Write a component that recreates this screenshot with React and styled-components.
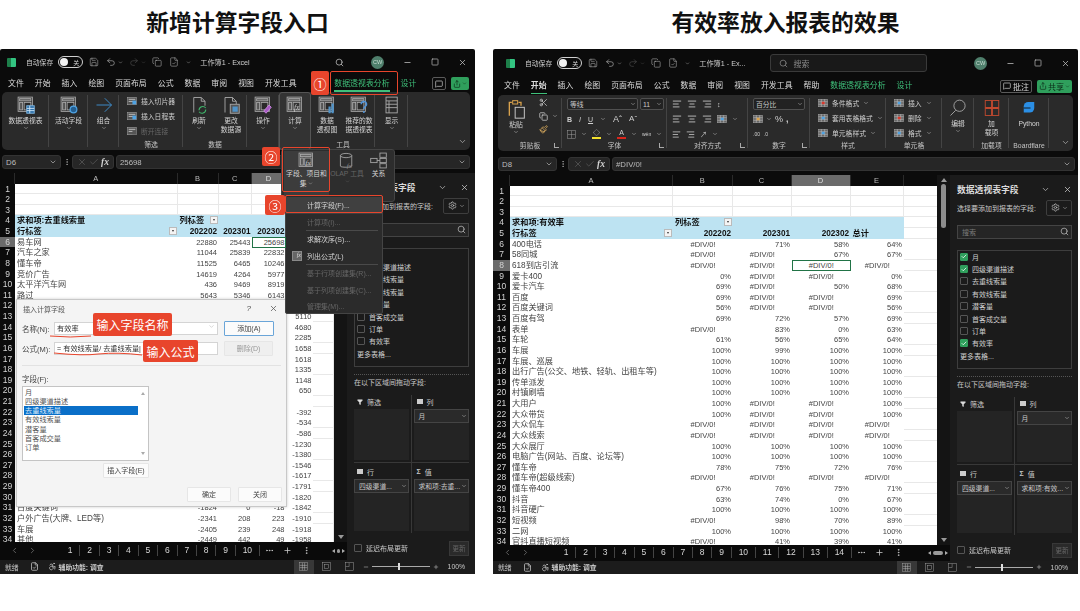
import React from 'react'
import styled, { createGlobalStyle } from 'styled-components'
import {
  Save, Undo2, Redo2, Search, ChevronDown, ChevronLeft, ChevronRight, X, Minus, Square, Check,
  MessageSquare, Share, Scissors, Copy, Paintbrush, Settings, Funnel, Plus, Ellipsis, EllipsisVertical,
  AlignLeft, AlignCenter, AlignRight, FileCheck, Accessibility,
} from 'lucide-react'

const CJK = `"Liberation Sans", "Noto Sans CJK SC", sans-serif`
const RED = '#e8452c'
const GREEN = '#3fc07a'

const Global = createGlobalStyle`
  html, body { margin: 0; background: #fff; overflow: hidden; }
  body { font-family: ${CJK}; }
  * { box-sizing: border-box; }
`

const Page = styled.div`
  display: flex;
  gap: 18px;
  width: 1080px;
  height: 611px;
  background: #fff;
`

const Column = styled.div`
  width: ${p => p.$w}px;
  display: flex;
  flex-direction: column;
`

const Heading = styled.h1`
  height: 49px;
  margin: 0;
  padding-bottom: 7px;
  display: flex;
  align-items: center;
  justify-content: center;
  font: 700 22.8px "Noto Sans CJK SC", sans-serif;
  color: #111;
`

const Window = styled.div`
  position: relative;
  height: 524.5px;
  display: flex;
  flex-direction: column;
  overflow: hidden;
  background: #0b0b0b;
  color: #d8d8d8;
  border-radius: 2px 2px 0 0;
  filter: blur(0.35px);
`

/* title bar */
const TitleBar = styled.div`
  flex: none;
  height: ${p => p.$h}px;
  display: flex;
  align-items: center;
  padding-left: ${p => p.$pl}px;
  padding-right: 8px;
`

const Logo = styled.div`
  width: 9px;
  height: 9px;
  background: linear-gradient(90deg, #1d7f4a 40%, #33c481 40%);
  border-radius: 1px;
  margin-right: 10px;
`

const SmallLabel = styled.span`
  font-size: ${p => p.$fs || 6.8}px;
  color: #cfcfcf;
  white-space: nowrap;
  margin-left: ${p => p.$ml || 0}px;
`

const Toggle = styled.div`
  width: 25px;
  height: 12px;
  margin-left: 5px;
  border: 1px solid #d0d0d0;
  border-radius: 6px;
  display: flex;
  align-items: center;
  justify-content: space-between;
  padding: 0 3px 0 1px;
  font-size: 6px;
  &::before {
    content: '';
    width: 8px;
    height: 8px;
    border-radius: 50%;
    background: #f2f2f2;
  }
`

const TitleIcon = styled.span`
  display: inline-flex;
  margin-left: ${p => p.$ml || 0}px;
  color: ${p => p.$c || '#c4c4c4'};
`

const SearchBox = styled.div`
  width: 157px;
  height: 18px;
  margin-left: 24px;
  border: 1px solid #3a3a3a;
  border-radius: 3px;
  background: #191919;
  display: flex;
  align-items: center;
  gap: 6px;
  padding-left: 8px;
  font-size: 8px;
  color: #8a8a8a;
`

const TitleRight = styled.div`
  margin-left: auto;
  display: flex;
  align-items: center;
`

const Avatar = styled.div`
  width: 13px;
  height: 13px;
  border-radius: 50%;
  background: #4f7f6c;
  color: #c8dcd2;
  font-size: 5.5px;
  display: flex;
  align-items: center;
  justify-content: center;
`

/* tab row */
const TabRow = styled.div`
  flex: none;
  height: ${p => p.$h}px;
  display: flex;
  align-items: center;
  gap: 11px;
  padding-left: ${p => p.$pl}px;
  padding-right: 6px;
`

const Tab = styled.span`
  position: relative;
  font-size: 7.9px;
  line-height: 16px;
  white-space: nowrap;
  visibility: ${p => (p.$ghost ? 'hidden' : 'visible')};
  color: ${p => (p.$green ? GREEN : '#dcdcdc')};
  font-weight: ${p => (p.$active ? 700 : 400)};
  &::after {
    content: ${p => (p.$under ? "''" : 'none')};
    position: absolute;
    left: 0;
    right: 0;
    bottom: 0;
    height: 1.2px;
    background: ${GREEN};
  }
`

const TabTools = styled.div`
  margin-left: auto;
  display: flex;
  align-items: center;
  gap: ${p => p.$gap}px;
`

const CommentBtn = styled.div`
  height: 13px;
  border: 1px solid #5a5a5a;
  border-radius: 2px;
  padding: 0 2px;
  display: flex;
  align-items: center;
  gap: 2px;
  font-size: 8px;
`

const ShareBtn = styled.div`
  height: 13px;
  padding: 0 2px;
  border-radius: 2px;
  background: #2f9f5c;
  color: #0c2a18;
  font-size: 8px;
  display: flex;
  align-items: center;
  gap: 1px;
`

/* ribbon */
const Ribbon = styled.div`
  flex: none;
  height: ${p => p.$h}px;
  margin: 0 ${p => p.$mr}px 0 ${p => p.$ml}px;
  background: #2a2a2a;
  border-radius: 5px;
  display: flex;
  position: relative;
`

const Group = styled.div`
  position: relative;
  width: ${p => p.$w}px;
  flex: none;
  display: flex;
  flex-direction: column;
  &::after {
    content: ${p => (p.$nosep ? 'none' : "''")};
    position: absolute;
    right: 0;
    top: 3px;
    bottom: 3px;
    width: 1px;
    background: #444;
  }
`

const GroupBody = styled.div`
  flex: 1;
  min-height: 0;
  display: flex;
  justify-content: ${p => p.$jc || 'center'};
`

const GroupLabel = styled.div`
  height: 11px;
  line-height: 11px;
  font-size: 6.8px;
  color: #c4c4c4;
  text-align: center;
  white-space: nowrap;
`

const BigButton = styled.div`
  flex: ${p => (p.$w ? 'none' : 1)};
  width: ${p => (p.$w ? `${p.$w}px` : 'auto')};
  display: flex;
  flex-direction: column;
  align-items: center;
  padding-top: 3px;
  font-size: 6.8px;
  line-height: 9px;
  text-align: center;
  color: #d4d4d4;
  border: 1px solid ${p => (p.$on ? '#555' : 'transparent')};
  border-radius: 3px;
  background: ${p => (p.$on ? '#333' : 'transparent')};
  white-space: nowrap;
  svg { flex: none; }
  span { margin-top: ${p => p.$gap ?? 2}px; }
`

const StackList = styled.div`
  flex: 1;
  display: flex;
  flex-direction: column;
  justify-content: space-around;
  padding: 1px 0 0 8px;
`

const StackItem = styled.div`
  display: flex;
  align-items: center;
  gap: 4px;
  font-size: 6.8px;
  white-space: nowrap;
  color: ${p => (p.$off ? '#666' : '#cfcfcf')};
`

const Launcher = styled.span`
  position: absolute;
  right: 3px;
  bottom: 3px;
  width: 5px;
  height: 5px;
  border-left: 1px solid #aaa;
  border-bottom: 1px solid #aaa;
`

const CornerChevron = styled.span`
  position: absolute;
  right: 3px;
  bottom: 4px;
  display: flex;
  color: #b0b0b0;
`

const ControlCol = styled.div`
  flex: 1;
  display: flex;
  flex-direction: column;
  gap: 3px;
  padding: 3px 3px 0 5px;
`

const ControlRow = styled.div`
  height: ${p => p.$h || 12}px;
  display: flex;
  align-items: center;
  gap: ${p => p.$gap ?? 4}px;
  font-size: 8px;
  color: #cfcfcf;
`

const Combo = styled.div`
  width: ${p => p.$w}px;
  height: 12px;
  border: 1px solid #505050;
  border-radius: 2px;
  background: #222;
  display: flex;
  align-items: center;
  justify-content: space-between;
  padding: 0 1px 0 2px;
  font-size: 6.8px;
  color: #c8c8c8;
`

const Glyph = styled.span`
  display: inline-flex;
  flex-direction: column;
  align-items: center;
  font-size: ${p => p.$s || 8}px;
  font-weight: ${p => p.$b || 400};
  font-style: ${p => p.$i ? 'italic' : 'normal'};
  text-decoration: ${p => p.$u ? 'underline' : 'none'};
  line-height: 1;
  color: #d0d0d0;
  &::after {
    content: ${p => (p.$bar ? "''" : 'none')};
    width: 9px;
    height: 2px;
    margin-top: 1px;
    background: ${p => p.$bar};
  }
`

/* formula bar */
const FormulaBar = styled.div`
  flex: none;
  height: 14px;
  margin: ${p => p.$mt}px ${p => p.$mr}px 0 ${p => p.$ml}px;
  display: flex;
  align-items: stretch;
  font-size: 7.8px;
  color: #bdbdbd;
`

const FormulaBox = styled.div`
  width: ${p => p.$w ? `${p.$w}px` : 'auto'};
  flex: ${p => p.$w ? 'none' : 1};
  margin-left: ${p => p.$ml || 0}px;
  background: #262626;
  border: 1px solid #333;
  border-radius: 3px;
  display: flex;
  align-items: center;
  justify-content: ${p => p.$jc || 'space-between'};
  padding: 0 3px;
`

const Dots = styled.span`
  width: 11px;
  display: flex;
  align-items: center;
  justify-content: center;
  color: #aaa;
`

const FxMark = styled.span`
  font: italic 700 9.5px "Liberation Serif", serif;
  color: #d4d4d4;
`

/* body */
const Body = styled.div`
  flex: 1;
  min-height: 0;
  margin-top: ${p => p.$mt}px;
  display: flex;
`

const SheetCol = styled.div`
  flex: 1;
  min-width: 0;
  display: flex;
  flex-direction: column;
`

const SheetWrap = styled.div`
  flex: 1;
  min-height: 0;
  display: flex;
`

const Sheet = styled.div`
  flex: 1;
  overflow: hidden;
  background: #fff;
`

const Row = styled.div`
  display: grid;
  grid-template-columns: ${p => p.$cols};
  height: ${p => p.$h || 10.64}px;
`

const ColHead = styled.div`
  background: ${p => (p.$sel ? '#6b6b6b' : '#0b0b0b')};
  color: ${p => (p.$sel ? '#e0e0e0' : '#bcbcbc')};
  border-right: 1px solid #2a2a2a;
  font-size: 7.5px;
  line-height: 11px;
  text-align: center;
`

const RowHead = styled.div`
  background: ${p => (p.$sel ? '#6b6b6b' : '#0b0b0b')};
  color: #d4d4d4;
  font-size: 8.5px;
  line-height: 10.6px;
  text-align: center;
`

const Cell = styled.div`
  position: relative;
  background: ${p => (p.$blue ? '#bde3f2' : '#fff')};
  color: ${p => (p.$bold ? '#111' : '#444')};
  font-weight: ${p => (p.$bold ? 700 : 400)};
  font-size: ${p => (p.$bold ? 8.2 : p.$num ? 7.5 : 8.2)}px;
  line-height: 11px;
  padding: 0 1.5px 0 2px;
  white-space: nowrap;
  text-align: ${p => p.$align || 'left'};
  border-right: ${p => (p.$grid ? '1px solid #e8e8e8' : 'none')};
  border-bottom: ${p => (p.$grid ? '1px solid #e8e8e8' : 'none')};
  outline: ${p => (p.$sel ? '1.2px solid #217346' : 'none')};
  outline-offset: -1px;
  z-index: ${p => (p.$sel ? 1 : 0)};
`

const FilterBtn = styled.span`
  position: absolute;
  right: 1px;
  top: 1px;
  width: 8px;
  height: 8px;
  background: #f4f4f4;
  border: 1px solid #bbb;
  display: flex;
  align-items: center;
  justify-content: center;
  &::after {
    content: '';
    border-left: 1.5px solid transparent;
    border-right: 1.5px solid transparent;
    border-top: 2px solid #333;
  }
`

const VScroll = styled.div`
  width: 13px;
  flex: none;
  background: #141414;
  display: flex;
  flex-direction: column;
  align-items: center;
  padding-top: 3px;
  &::before {
    content: '';
    border-left: 3px solid transparent;
    border-right: 3px solid transparent;
    border-bottom: 4px solid #999;
    margin-bottom: 2px;
  }
  &::after {
    content: '';
    margin-top: auto;
    margin-bottom: 3px;
    border-left: 3px solid transparent;
    border-right: 3px solid transparent;
    border-top: 4px solid #999;
  }
`

const VThumb = styled.div`
  width: 5px;
  height: 44px;
  border-radius: 3px;
  background: #8c8c8c;
`

const TabsBar = styled.div`
  flex: none;
  height: ${p => p.$h}px;
  background: #0a0a0a;
  display: flex;
  align-items: center;
  padding-left: 10px;
  color: #cfcfcf;
  font-size: 8.5px;
`

const SheetTab = styled.span`
  padding: 0 6.85px;
  line-height: 11px;
  border-right: 1px solid #444;
  color: #d8d8d8;
`

const TabsNav = styled.div`
  display: flex;
  align-items: center;
  gap: 9px;
  margin-right: ${p => p.$mr}px;
  color: #777;
`

const TabsEnd = styled.div`
  display: flex;
  align-items: center;
  gap: 9.5px;
  margin-left: 5px;
  color: #cfcfcf;
`

const HScroll = styled.div`
  margin-left: auto;
  margin-right: 2px;
  display: flex;
  align-items: center;
  gap: 2px;
  &::before, &::after {
    content: '';
    border-top: 2.5px solid transparent;
    border-bottom: 2.5px solid transparent;
  }
  &::before { border-right: 3px solid #aaa; }
  &::after { border-left: 3px solid #aaa; }
`

const HThumb = styled.span`
  width: ${p => p.$w}px;
  height: 4px;
  border-radius: 2px;
  background: #999;
`

/* pivot panel */
const Panel = styled.aside`
  width: 128px;
  flex: none;
  background: #1b1b1b;
  padding: 8px 6px 0 7px;
  display: flex;
  flex-direction: column;
  font-size: 7px;
  color: #c8c8c8;
`

const PanelHead = styled.div`
  height: 13px;
  display: flex;
  align-items: center;
  font-size: 8.8px;
  font-weight: 700;
  color: #dadada;
  gap: 13px;
  span { margin-right: auto; white-space: nowrap; }
`

const PanelSub = styled.div`
  height: 16px;
  margin-top: 4px;
  display: flex;
  align-items: center;
  justify-content: space-between;
  white-space: nowrap;
`

const GearBtn = styled.div`
  width: 26px;
  height: 16px;
  border: 1px solid #3e3e3e;
  border-radius: 2px;
  display: flex;
  align-items: center;
  justify-content: center;
  gap: 2px;
`

const PanelSearch = styled.div`
  height: 14px;
  margin-top: 9px;
  border: 1px solid #444;
  background: #252525;
  display: flex;
  align-items: center;
  justify-content: space-between;
  padding: 0 2px 0 4px;
  color: #7a7a7a;
`

const FieldList = styled.div`
  height: 119px;
  margin-top: 11px;
  border: 1px solid #3e3e3e;
  padding: 0 0 0 2px;
`

const FieldRow = styled.div`
  height: 12.4px;
  display: flex;
  align-items: center;
  gap: 4px;
  white-space: nowrap;
  color: #cfcfcf;
`

const CheckBox = styled.span`
  width: 8px;
  height: 8px;
  flex: none;
  border: 1px solid ${p => (p.$on ? '#2f9f5c' : '#555')};
  background: ${p => (p.$on ? '#2f9f5c' : 'transparent')};
  border-radius: 1px;
  display: flex;
  align-items: center;
  justify-content: center;
  color: #fff;
`

const DashLine = styled.div`
  margin-top: 7px;
  border-top: 1px dotted #555;
`

const PanelHint = styled.div`
  height: 12px;
  margin-top: 2px;
  line-height: 12px;
  white-space: nowrap;
`

const Areas = styled.div`
  margin-top: 6px;
  display: grid;
  grid-template-columns: 1fr 1fr;
  grid-template-rows: 68px 70px;
`

const Area = styled.div`
  display: flex;
  flex-direction: column;
  border-right: ${p => (p.$right ? 'none' : '1px solid #383838')};
  border-bottom: ${p => (p.$bottom ? 'none' : '1px solid #383838')};
  padding: ${p => (p.$bottom ? 2 : 0)}px ${p => (p.$right ? '0 0 2px' : '2px 0 0')};
`

const AreaHead = styled.div`
  height: 14px;
  flex: none;
  display: flex;
  align-items: center;
  gap: 4px;
  padding-left: 3px;
`

const AreaMark = styled.span`
  width: 6px;
  height: 5px;
  background: #ccc;
`

const AreaBox = styled.div`
  flex: 1;
  margin-bottom: 2px;
  background: #242424;
`

const AreaChip = styled.div`
  height: 14px;
  flex: none;
  border: 1px solid #444;
  background: #2a2a2a;
  display: flex;
  align-items: center;
  justify-content: space-between;
  padding: 0 1px 0 4px;
  white-space: nowrap;
  font-size: 6.8px;
`

const PanelFoot = styled.div`
  margin-top: 8px;
  display: flex;
  align-items: center;
  gap: 4px;
`

const UpdateBtn = styled.div`
  margin-left: auto;
  width: 20px;
  height: 15px;
  background: #2a2a2a;
  border: 1px solid #383838;
  color: #666;
  font-size: 6.5px;
  line-height: 13px;
  text-align: center;
`

/* status bar */
const StatusBar = styled.div`
  flex: none;
  height: ${p => p.$h}px;
  background: #1c1c1c;
  display: flex;
  align-items: center;
  padding: 0 10px 0 5px;
  font-size: 6.8px;
  color: #c8c8c8;
`

const StatusItem = styled.span`
  display: inline-flex;
  align-items: center;
  gap: 2px;
  margin-left: ${p => p.$ml || 0}px;
  font-weight: ${p => p.$b || 400};
`

const StatusRight = styled.div`
  margin-left: auto;
  display: flex;
  align-items: center;
  height: 100%;
`

const ViewBtn = styled.span`
  width: 20px;
  height: 100%;
  margin-right: 3px;
  display: flex;
  align-items: center;
  justify-content: center;
  background: ${p => (p.$on ? '#383838' : 'transparent')};
`

const Slider = styled.div`
  position: relative;
  width: 58px;
  height: 1px;
  margin: 0 3px;
  background: #aaa;
  &::after {
    content: '';
    position: absolute;
    left: 26px;
    top: -3px;
    width: 2px;
    height: 7px;
    background: #ddd;
  }
`

/* insert dialog */
const Dialog = styled.div`
  position: absolute;
  left: 16px;
  top: 250px;
  width: 271px;
  height: 208px;
  background: #f4f4f4;
  border: 1px solid #c8c8c8;
  color: #444;
  font-size: 7.5px;
  padding: 4px 5px 0;
  display: flex;
  flex-direction: column;
  box-shadow: 0 0 3px rgba(0,0,0,.2);
`

const DialogHead = styled.div`
  height: 9px;
  display: flex;
  align-items: center;
  justify-content: space-between;
  font-size: 7px;
  padding: 0 3px 0 1px;
  color: #555;
  span:last-child { display: flex; gap: 18px; font-size: 8px; }
`

const FormRow = styled.div`
  margin-top: ${p => p.$mt}px;
  display: flex;
  align-items: center;
  height: 15px;
`

const FormLabel = styled.span`
  width: 32px;
  flex: none;
  white-space: nowrap;
`

const FormInput = styled.div`
  width: 164px;
  height: 13px;
  background: #fff;
  border: 1px solid #d4d4d4;
  padding: 0 2px;
  line-height: 11px;
  font-size: 7.2px;
  color: #333;
  display: flex;
  justify-content: space-between;
  white-space: nowrap;
  overflow: hidden;
`

const DlgBtn = styled.div`
  width: ${p => p.$w}px;
  height: 15px;
  margin-left: ${p => p.$ml || 0}px;
  background: ${p => (p.$off ? '#efefef' : '#fbfbfb')};
  border: 1px solid ${p => (p.$primary ? '#6aa5d8' : '#e6e6e6')};
  color: ${p => (p.$off ? '#999' : '#444')};
  line-height: 13px;
  font-size: 7px;
  text-align: center;
  border-radius: 1px;
  flex: none;
`

const DlgRule = styled.div`
  margin-top: 9px;
  border-top: 1px solid #e2e2e2;
`

const FieldTitle = styled.div`
  margin-top: 9px;
  line-height: 9px;
`

const DlgList = styled.div`
  width: 127px;
  height: 75px;
  margin-top: 2px;
  background: #fff;
  border: 1px solid #c4c4c4;
  padding: 1px 10px 0 1px;
  position: relative;
  &::before, &::after {
    content: '';
    position: absolute;
    right: 3px;
    border-left: 2.5px solid transparent;
    border-right: 2.5px solid transparent;
  }
  &::before { top: 5px; border-bottom: 3px solid #aaa; }
  &::after { bottom: 5px; border-top: 3px solid #aaa; }
`

const DlgItem = styled.div`
  height: 9.15px;
  line-height: 9.15px;
  font-size: 7.2px;
  padding-left: 1px;
  background: ${p => (p.$sel ? '#0a6fc8' : 'transparent')};
  color: ${p => (p.$sel ? '#dcecfa' : '#555')};
`

const DlgFootRow = styled.div`
  margin-top: ${p => p.$mt}px;
  display: flex;
  padding-left: ${p => p.$pl || 0}px;
`

/* ribbon flyout + menu */
const Flyout = styled.div`
  position: absolute;
  left: 281px;
  top: 100px;
  width: 114px;
  height: 53px;
  background: #2d2d2d;
  border: 1px solid #444;
  border-radius: 3px;
  display: flex;
  padding: 1px 2px;
`

const FlyBtn = styled.div`
  width: ${p => p.$w}px;
  flex: none;
  display: flex;
  flex-direction: column;
  align-items: center;
  padding-top: 1px;
  text-align: center;
  font-size: 6.8px;
  line-height: 10px;
  white-space: nowrap;
  color: ${p => (p.$off ? '#666' : '#d4d4d4')};
  background: ${p => (p.$on ? '#3c3c3c' : 'transparent')};
  svg { flex: none; }
`

const Menu = styled.div`
  position: absolute;
  left: 285px;
  top: 146px;
  width: 98px;
  height: 119px;
  background: #2b2b2b;
  border: 1px solid #444;
  border-radius: 2px;
  padding: 1px 0;
`

const MenuItem = styled.div`
  height: ${p => p.$h || 16.5}px;
  display: flex;
  align-items: center;
  padding-left: 21px;
  position: relative;
  font-size: 7px;
  white-space: nowrap;
  color: ${p => (p.$off ? '#666' : '#d4d4d4')};
  background: ${p => (p.$on ? '#404040' : 'transparent')};
`

const MenuIcon = styled.span`
  position: absolute;
  left: 6px;
  top: 3px;
  width: 10px;
  height: 10px;
  background: #666;
  border: 1px solid #8a8a8a;
  font: italic 6px "Liberation Serif", serif;
  text-align: right;
  color: #ddd;
`

const MenuRule = styled.div`
  margin: 0 4px 0 20px;
  border-top: 1px solid #4a4a4a;
`

/* annotations over the screenshot */
const Mark = styled.div`
  position: absolute;
  left: ${p => p.$x}px;
  top: ${p => p.$y}px;
  width: ${p => p.$w}px;
  height: ${p => p.$h}px;
  background: ${RED};
  color: #fff;
  border-radius: 2px;
  font: ${p => p.$fs || 14}px "Noto Sans CJK SC", sans-serif;
  display: flex;
  align-items: center;
  justify-content: center;
  white-space: nowrap;
  z-index: 5;
`

const Outline = styled.div`
  position: absolute;
  left: ${p => p.$x}px;
  top: ${p => p.$y}px;
  width: ${p => p.$w}px;
  height: ${p => p.$h}px;
  border: 1px solid ${RED};
  border-radius: 2px;
  z-index: 5;
`

const Scribble = styled.svg`
  position: absolute;
  left: ${p => p.$x}px;
  top: ${p => p.$y}px;
  z-index: 5;
`

/* ribbon drawings */
const Draw = ({ s = 18, children }) => (
  <svg width={s} height={s} viewBox="0 0 24 24" fill="none" stroke="#a9a9a9" strokeWidth="1.2">{children}</svg>
)

const PivotBase = () => (
  <>
    <rect x="1.5" y="1.5" width="19" height="19" />
    <rect x="3.5" y="3.5" width="15" height="3" fill="#666" />
    <rect x="3.5" y="8.5" width="4" height="10" fill="#555" />
    <rect x="9.5" y="8.5" width="9" height="10" />
  </>
)

const IconPivot = () => <Draw><PivotBase /><rect x="13" y="13" width="10" height="10" fill="#2b6ea8" stroke="#7fb6e0" /><path d="M13 16.5h10M13 19.5h10M17 13v10" stroke="#cfe6f7" /></Draw>
const IconField = () => <Draw><PivotBase /><circle cx="18" cy="18" r="4.5" fill="#235f92" stroke="#4fa3e3" strokeWidth="1.6" /></Draw>
const IconArrow = () => <Draw><path d="M2 12h20M13 3l9 9-9 9" stroke="#3f93d6" /></Draw>
const IconSheet = ({ tone = '#4fa3e3' }) => <Draw s={10}><rect x="1.5" y="3" width="21" height="18" fill="#555" /><path d="M4 8h16M4 13h16" stroke="#ccc" strokeWidth="2" /><rect x="13" y="11" width="9" height="9" fill={tone} stroke="none" /></Draw>
const IconRefresh = () => <Draw><path d="M5 22V2h10l5 5v6M15 2v5h5" /><path d="M12 19a5 5 0 0 1 9-3M21 18a5 5 0 0 1-9 3" stroke="#3fb56b" strokeWidth="1.4" /></Draw>
const IconSource = () => <Draw><path d="M4 22V2h10l5 5v4M14 2v5h5" /><rect x="11" y="11" width="12" height="12" fill="#555" /><rect x="14" y="14" width="7" height="7" fill="#4f93c9" stroke="none" /></Draw>
const IconAction = () => <Draw><PivotBase /><path d="M13 20l7-8 3 3-7 8z" fill="#a85ac4" stroke="#c98adf" /></Draw>
const IconCalc = ({ s = 18 }) => <Draw s={s}><PivotBase /><text x="10.5" y="18" fontSize="10" fontStyle="italic" fontFamily="Liberation Serif" fill="#d0d0d0" stroke="none">fx</text></Draw>
const IconChart = () => <Draw><PivotBase /><rect x="14" y="14" width="3" height="9" fill="#4f93c9" stroke="none" /><rect x="18" y="10" width="3" height="13" fill="#4f93c9" stroke="none" /></Draw>
const IconRecommend = () => <Draw><PivotBase /><path d="M15 11a3.5 3.5 0 1 1 5 3c-1.5 1-1.5 2-1.5 3.5M18.5 20v2.5" stroke="#4f93d9" strokeWidth="2" /></Draw>
const IconShow = () => <Draw><rect x="4" y="1.5" width="15" height="21" /><path d="M4 6.5h15M4 11h15M4 15.5h15M8 6.5v16" /></Draw>
const IconOlap = () => <Draw><ellipse cx="10" cy="5" rx="8" ry="3" /><path d="M2 5v15c0 2 16 2 16 0V5" /><text x="11" y="23" fontSize="10" fontStyle="italic" fontFamily="Liberation Serif" fill="#888" stroke="none">fx</text></Draw>
const IconRelation = () => <Draw><rect x="14" y="1.5" width="9" height="6" /><rect x="14" y="9" width="9" height="6" /><rect x="14" y="16.5" width="9" height="6" /><rect x="1" y="9" width="9" height="6" /><path d="M10 12h4" /></Draw>
const IconPaste = () => <Draw s={20}><path d="M4 20V4h3M15 4h3v4" stroke="#d9a24d" strokeWidth="1.6" /><rect x="8" y="2" width="6" height="4" stroke="#d9a24d" /><rect x="11" y="10" width="11" height="13" fill="#2a2a2a" stroke="#c4c4c4" /></Draw>
const IconStyle = ({ tone }) => <Draw s={10}><rect x="1" y="3" width="22" height="18" fill="#666" /><path d="M1 9h22M1 15h22M8 3v18M16 3v18" stroke="#ccc" /><rect x="9" y="9" width="7" height="6" fill={tone} stroke="none" /></Draw>
const IconAddins = () => <Draw><rect x="3" y="2" width="18" height="20" stroke="#c2492f" /><path d="M3 12h18M12 2v20" stroke="#c2492f" strokeWidth="2.4" /></Draw>
const IconPython = () => <Draw><path d="M5 10a6 6 0 0 1 6-6h8v8a6 6 0 0 1-6 6H5z" fill="#2b8fe6" stroke="none" /><path d="M5 12h9" stroke="#111" /></Draw>
const IconLens = () => <Draw><circle cx="14" cy="9" r="7.5" /><path d="M9 15L2 22" /></Draw>
const Caret = ({ s = 6, c = '#bdbdbd' }) => <ChevronDown size={s} color={c} strokeWidth={2} />

/* sheet data */
const leftRows = {
  4: ['求和项:去重线索量', '列标签', '', '', ''],
  5: ['行标签', '202202', '202301', '202302', ''],
  6: ['易车网', '22880', '25443', '25698', ''],
  7: ['汽车之家', '11044', '25839', '22832', ''],
  8: ['懂车帝', '11525', '6465', '10246', ''],
  9: ['竞价广告', '14619', '4264', '5977', ''],
  10: ['太平洋汽车网', '436', '9469', '8919', ''],
  11: ['路过', '5643', '5346', '6143', ''],
  13: ['', '', '', '', '5110'],
  14: ['', '', '', '', '4680'],
  15: ['', '', '', '', '2285'],
  16: ['', '', '', '', '1658'],
  17: ['', '', '', '', '1618'],
  18: ['', '', '', '', '1335'],
  19: ['', '', '', '', '1148'],
  20: ['', '', '', '', '650'],
  22: ['', '', '', '', '-392'],
  23: ['', '', '', '', '-534'],
  24: ['', '', '', '', '-586'],
  25: ['', '', '', '', '-1230'],
  26: ['', '', '', '', '-1380'],
  27: ['', '', '', '', '-1546'],
  28: ['', '', '', '', '-1617'],
  29: ['', '', '', '', '-1791'],
  30: ['', '', '', '', '-1820'],
  31: ['百度关键词', '-1824', '0', '-18', '-1842'],
  32: ['户外广告(大牌、LED等)', '-2341', '208', '223', '-1910'],
  33: ['车展', '-2405', '239', '248', '-1918'],
  34: ['其他', '-2449', '442', '49', '-1958'],
}

const E = '#DIV/0!'
const rightRows = {
  4: ['求和项:有效率', '列标签', '', '', ''],
  5: ['行标签', '202202', '202301', '202302', '总计'],
  6: ['400电话', E, '71%', '58%', '64%'],
  7: ['58同城', E, E, '67%', '67%'],
  8: ['618到店引流', E, E, E, E],
  9: ['爱卡400', '0%', E, E, '0%'],
  10: ['爱卡汽车', '69%', E, '50%', '68%'],
  11: ['百度', '69%', E, E, '69%'],
  12: ['百度关键词', '56%', E, E, '56%'],
  13: ['百度有驾', '69%', '72%', '57%', '69%'],
  14: ['表单', E, '83%', '0%', '63%'],
  15: ['车轮', '61%', '56%', '65%', '64%'],
  16: ['车展', '100%', '99%', '100%', '100%'],
  17: ['车展、巡展', '100%', '100%', '100%', '100%'],
  18: ['出行广告(公交、地铁、轻轨、出租车等)', '100%', '100%', '100%', '100%'],
  19: ['传单派发', '100%', '100%', '100%', '100%'],
  20: ['村镇刷墙', '100%', '100%', '100%', '100%'],
  21: ['大用户', '100%', E, E, '100%'],
  22: ['大众带货', '100%', E, E, '100%'],
  23: ['大众侃车', E, E, E, E],
  24: ['大众线索', E, E, E, E],
  25: ['大众展厅', '100%', '100%', '100%', '100%'],
  26: ['电脑广告(网站、百度、论坛等)', '100%', '100%', '100%', '100%'],
  27: ['懂车帝', '78%', '75%', '72%', '76%'],
  28: ['懂车帝(超级线索)', E, E, E, E],
  29: ['懂车帝400', '67%', '76%', '75%', '71%'],
  30: ['抖音', '63%', '74%', '0%', '67%'],
  31: ['抖音硬广', '100%', '100%', '100%', '100%'],
  32: ['短视频', E, '98%', '70%', '89%'],
  33: ['二网', '100%', '100%', '100%', '100%'],
  34: ['官抖直播短视频', E, '41%', '39%', '41%'],
}

const rowNumbers = Array.from({ length: 34 }, (_, i) => i + 1)
const COLS = ['A', 'B', 'C', 'D', 'E']

function SheetGrid({ cols, data, selRow, totalCol }) {
  return (
    <Sheet>
      <Row $cols={cols} $h={11}>
        <ColHead />
        {[...COLS, ''].map((c, i) => <ColHead key={i} $sel={c === 'D'}>{c}</ColHead>)}
      </Row>
      {rowNumbers.map(n => {
        const vals = data[n] || ['', '', '', '', '']
        const blue = n === 4 || n === 5
        return (
          <Row key={n} $cols={cols}>
            <RowHead $sel={n === selRow}>{n}</RowHead>
            {vals.map((v, i) => {
              const isErr = v === E
              const leftAlign = i === 0 || (n === 4 && i === 1) || (totalCol && n === 5 && i === 4)
              return (
                <Cell
                  key={i}
                  $blue={blue}
                  $bold={blue}
                  $num={!leftAlign}
                  $grid={n <= 3}
                  $align={leftAlign ? 'left' : isErr ? 'center' : 'right'}
                  $sel={n === selRow && i === 3}
                >
                  {v}
                  {blue && n === 5 && i === 0 && <FilterBtn />}
                  {n === 4 && i === 1 && <FilterBtn />}
                </Cell>
              )
            })}
            <Cell $grid />
          </Row>
        )
      })}
    </Sheet>
  )
}

function PivotPanel({ checks, chips }) {
  const fields = ['月', '四级渠道描述', '去重线索量', '有效线索量', '潜客量', '首客成交量', '订单', '有效率']
  return (
    <Panel>
      <PanelHead>
        <span>数据透视表字段</span>
        <ChevronDown size={9} color="#bbb" />
        <X size={9} color="#ccc" />
      </PanelHead>
      <PanelSub>
        选择要添加到报表的字段:
        <GearBtn><Settings size={9} color="#bbb" /><Caret /></GearBtn>
      </PanelSub>
      <PanelSearch>搜索<Search size={9} color="#bbb" /></PanelSearch>
      <FieldList>
        {fields.map((f, i) => (
          <FieldRow key={f}>
            <CheckBox $on={checks.includes(i)}>{checks.includes(i) && <Check size={7} strokeWidth={3} />}</CheckBox>
            {f}
          </FieldRow>
        ))}
        <FieldRow>更多表格...</FieldRow>
      </FieldList>
      <DashLine />
      <PanelHint>在以下区域间拖动字段:</PanelHint>
      <Areas>
        <Area>
          <AreaHead><Funnel size={6} fill="#ddd" color="#ddd" />筛选</AreaHead>
          <AreaBox />
        </Area>
        <Area $right>
          <AreaHead><AreaMark />列</AreaHead>
          <AreaChip>月<Caret /></AreaChip>
          <AreaBox />
        </Area>
        <Area $bottom>
          <AreaHead><AreaMark />行</AreaHead>
          <AreaChip>{chips[0]}<Caret /></AreaChip>
          <AreaBox />
        </Area>
        <Area $right $bottom>
          <AreaHead><b>Σ</b>值</AreaHead>
          <AreaChip>{chips[1]}<Caret /></AreaChip>
          <AreaBox />
        </Area>
      </Areas>
      <PanelFoot>
        <CheckBox />
        延迟布局更新
        <UpdateBtn>更新</UpdateBtn>
      </PanelFoot>
    </Panel>
  )
}

function Status() {
  return (
    <>
      <StatusItem>就绪</StatusItem>
      <StatusItem $ml={11}><FileCheck size={9} /></StatusItem>
      <StatusItem $ml={9} $b={700}><Accessibility size={9} /> 辅助功能: 调查</StatusItem>
      <StatusRight>
        <ViewBtn $on><Draw s={9}><rect x="2" y="2" width="20" height="20" /><path d="M2 9h20M2 15h20M9 2v20M15 2v20" stroke="#ccc" /></Draw></ViewBtn>
        <ViewBtn><Draw s={9}><rect x="2" y="2" width="20" height="20" /><rect x="6" y="6" width="12" height="12" /></Draw></ViewBtn>
        <ViewBtn><Draw s={9}><rect x="2" y="2" width="20" height="20" /><path d="M11 2v10H2" /></Draw></ViewBtn>
        <Minus size={6} />
        <Slider />
        <Plus size={6} />
        <StatusItem $ml={9}>100%</StatusItem>
      </StatusRight>
    </>
  )
}

function FormulaRow({ name, value, mt, ml, mr, boxW }) {
  return (
    <FormulaBar $mt={mt} $ml={ml} $mr={mr}>
      <FormulaBox $w={59}>{name}<Caret s={8} /></FormulaBox>
      <Dots><EllipsisVertical size={8} /></Dots>
      <FormulaBox $w={boxW} $jc="space-around">
        <X size={10} color="#555" />
        <Check size={10} color="#555" />
        <FxMark>fx</FxMark>
      </FormulaBox>
      <FormulaBox $ml={2}>{value}<Caret s={8} /></FormulaBox>
    </FormulaBar>
  )
}

function TitleIcons() {
  return (
    <>
      <TitleIcon $ml={6}><Save size={10} strokeWidth={1.2} /></TitleIcon>
      <TitleIcon $ml={7}><Undo2 size={10} strokeWidth={1.4} /></TitleIcon>
      <TitleIcon $ml={2}><Caret s={5} /></TitleIcon>
      <TitleIcon $ml={6} $c="#555"><Redo2 size={10} strokeWidth={1.4} /></TitleIcon>
      <TitleIcon $ml={2} $c="#555"><Caret s={5} c="#555" /></TitleIcon>
      <TitleIcon $ml={6}><Copy size={10} strokeWidth={1.2} /></TitleIcon>
      <TitleIcon $ml={7}><FileCheck size={10} strokeWidth={1.2} /></TitleIcon>
      <TitleIcon $ml={7}><Caret s={5} /></TitleIcon>
    </>
  )
}

function LeftWindow() {
  return (
    <Window>
      <TitleBar $h={26} $pl={7}>
        <Logo />
        <SmallLabel>自动保存</SmallLabel>
        <Toggle>关</Toggle>
        <TitleIcons />
        <SmallLabel $ml={9} $fs={7.2}>工作簿1 - Excel</SmallLabel>
        <TitleRight>
          <TitleIcon $ml={0}><Search size={9} /></TitleIcon>
          <TitleIcon $ml={27}><Avatar>CW</Avatar></TitleIcon>
          <TitleIcon $ml={19}><Minus size={9} /></TitleIcon>
          <TitleIcon $ml={19}><Square size={8} /></TitleIcon>
          <TitleIcon $ml={19}><X size={9} /></TitleIcon>
        </TitleRight>
      </TitleBar>
      <TabRow $h={17} $pl={8}>
        {['文件', '开始', '插入', '绘图', '页面布局', '公式', '数据', '审阅', '视图', '开发工具'].map(t => <Tab key={t}>{t}</Tab>)}
        <Tab $ghost>帮助</Tab>
        <Tab $green $under>数据透视表分析</Tab>
        <Tab $green>设计</Tab>
        <TabTools $gap={5}>
          <CommentBtn><MessageSquare size={8} /></CommentBtn>
          <ShareBtn><Share size={8} /><Caret s={5} c="#0c2a18" /></ShareBtn>
        </TabTools>
      </TabRow>
      <Ribbon $h={58} $ml={2} $mr={5}>
        <Group $w={47}><GroupBody><BigButton><IconPivot /><span>数据透视表</span><Caret /></BigButton></GroupBody></Group>
        <Group $w={39}><GroupBody><BigButton><IconField /><span>活动字段</span><Caret /></BigButton></GroupBody></Group>
        <Group $w={31}><GroupBody><BigButton><IconArrow /><span>组合</span><Caret /></BigButton></GroupBody></Group>
        <Group $w={64}>
          <GroupBody>
            <StackList>
              <StackItem><IconSheet />插入切片器</StackItem>
              <StackItem><IconSheet />插入日程表</StackItem>
              <StackItem $off><IconSheet tone="#555" />断开连接</StackItem>
            </StackList>
          </GroupBody>
          <GroupLabel>筛选</GroupLabel>
        </Group>
        <Group $w={64}>
          <GroupBody>
            <BigButton><IconRefresh /><span>刷新</span><Caret /></BigButton>
            <BigButton><IconSource /><span>更改<br />数据源</span></BigButton>
          </GroupBody>
          <GroupLabel>数据</GroupLabel>
        </Group>
        <Group $w={32}><GroupBody><BigButton><IconAction /><span>操作</span><Caret /></BigButton></GroupBody></Group>
        <Group $w={32} $nosep><GroupBody><BigButton $on><IconCalc /><span>计算</span><Caret /></BigButton></GroupBody></Group>
        <Group $w={64}>
          <GroupBody>
            <BigButton><IconChart /><span>数据<br />透视图</span></BigButton>
            <BigButton><IconRecommend /><span>推荐的数<br />据透视表</span></BigButton>
          </GroupBody>
          <GroupLabel>工具</GroupLabel>
        </Group>
        <Group $w={33}><GroupBody><BigButton><IconShow /><span>显示</span><Caret /></BigButton></GroupBody></Group>
        <CornerChevron><ChevronDown size={9} /></CornerChevron>
      </Ribbon>
      <FormulaRow name="D6" value="25698" mt={5} ml={2} mr={5} boxW={42} />
      <Body $mt={3.5}>
        <SheetCol>
          <SheetWrap>
            <SheetGrid cols="15px 162.5px 41px 33.5px 34px 27px 21px" data={leftRows} selRow={6} />
            <VScroll><VThumb /></VScroll>
          </SheetWrap>
          <TabsBar $h={18.5}>
            <TabsNav $mr={24}><ChevronLeft size={9} /><ChevronRight size={9} /></TabsNav>
            {[1, 2, 3, 4, 5, 6, 7, 8, 9, 10].map(n => <SheetTab key={n}>{n}</SheetTab>)}
            <TabsEnd>
              <Ellipsis size={9} />
              <Plus size={9} />
              <EllipsisVertical size={9} />
            </TabsEnd>
            <HScroll><HThumb $w={3} /></HScroll>
          </TabsBar>
        </SheetCol>
        <PivotPanel checks={[0, 1, 2]} chips={['四级渠道...', '求和项:去重...']} />
      </Body>
      <StatusBar $h={13.5}><Status /></StatusBar>

      <Dialog>
        <DialogHead><span>插入计算字段</span><span><i>?</i><X size={9} /></span></DialogHead>
        <FormRow $mt={8}>
          <FormLabel>名称(N):</FormLabel>
          <FormInput>有效率<Caret s={7} /></FormInput>
          <DlgBtn $w={50} $ml={6} $primary>添加(A)</DlgBtn>
        </FormRow>
        <FormRow $mt={5}>
          <FormLabel>公式(M):</FormLabel>
          <FormInput>= 有效线索量/ 去重线索量|</FormInput>
          <DlgBtn $w={49} $ml={6} $off>删除(D)</DlgBtn>
        </FormRow>
        <DlgRule />
        <FieldTitle>字段(F):</FieldTitle>
        <DlgList>
          {['月', '四级渠道描述', '去重线索量', '有效线索量', '潜客量', '首客成交量', '订单'].map((f, i) => (
            <DlgItem key={f} $sel={i === 2}>{f}</DlgItem>
          ))}
        </DlgList>
        <DlgFootRow $mt={2} $pl={81}><DlgBtn $w={46}>插入字段(E)</DlgBtn></DlgFootRow>
        <DlgFootRow $mt={9} $pl={165}>
          <DlgBtn $w={44}>确定</DlgBtn>
          <DlgBtn $w={44} $ml={7}>关闭</DlgBtn>
        </DlgFootRow>
      </Dialog>

      <Flyout>
        <FlyBtn $w={45} $on><IconCalc s={17} />字段、项目和<br /><span>集 <Caret s={5} /></span></FlyBtn>
        <FlyBtn $w={36} $off><Draw s={17}><ellipse cx="10" cy="5" rx="8" ry="3" /><path d="M2 5v15c0 2 16 2 16 0V5" /><text x="11" y="23" fontSize="10" fontStyle="italic" fontFamily="Liberation Serif" fill="#888" stroke="none">fx</text></Draw>OLAP 工具<br /><Caret s={5} c="#666" /></FlyBtn>
        <FlyBtn $w={27}><Draw s={17}><rect x="14" y="1.5" width="9" height="6" /><rect x="14" y="9" width="9" height="6" /><rect x="14" y="16.5" width="9" height="6" /><rect x="1" y="9" width="9" height="6" /><path d="M10 12h4" /></Draw>关系</FlyBtn>
      </Flyout>
      <Menu>
        <MenuItem $on>计算字段(F)...</MenuItem>
        <MenuItem $off>计算项(I)...</MenuItem>
        <MenuRule />
        <MenuItem>求解次序(S)...</MenuItem>
        <MenuItem><MenuIcon>fx</MenuIcon>列出公式(L)</MenuItem>
        <MenuRule />
        <MenuItem $off>基于行项创建集(R)...</MenuItem>
        <MenuItem $off>基于列项创建集(C)...</MenuItem>
        <MenuItem $off>管理集(M)...</MenuItem>
      </Menu>

      <Mark $x={311} $y={22} $w={18} $h={24} $fs={13}>①</Mark>
      <Outline $x={330} $y={22} $w={68} $h={24} />
      <Mark $x={262} $y={98} $w={18} $h={19} $fs={13}>②</Mark>
      <Outline $x={282} $y={98} $w={48} $h={45} />
      <Mark $x={265} $y={146} $w={20} $h={20} $fs={13}>③</Mark>
      <Outline $x={285} $y={146} $w={98} $h={18} />
      <Mark $x={93} $y={264} $w={79} $h={23} $fs={12}>输入字段名称</Mark>
      <Mark $x={143} $y={291} $w={55} $h={22} $fs={12}>输入公式</Mark>
      <Scribble $x={49} $y={284} width="44" height="6"><path d="M1 3q20 2 41 0" stroke={RED} fill="none" strokeWidth="1" /></Scribble>
      <Scribble $x={53} $y={302} width="90" height="6"><path d="M1 2q30 3 44 1 20-2 44 1" stroke={RED} fill="none" strokeWidth="1" /></Scribble>
    </Window>
  )
}

function RightWindow() {
  return (
    <Window>
      <TitleBar $h={28} $pl={13}>
        <Logo />
        <SmallLabel>自动保存</SmallLabel>
        <Toggle>关</Toggle>
        <TitleIcons />
        <SmallLabel $ml={9} $fs={7.2}>工作簿1 - Ex...</SmallLabel>
        <SearchBox><Search size={9} />搜索</SearchBox>
        <TitleRight>
          <TitleIcon><Avatar>CW</Avatar></TitleIcon>
          <TitleIcon $ml={19}><Minus size={9} /></TitleIcon>
          <TitleIcon $ml={19}><Square size={8} /></TitleIcon>
          <TitleIcon $ml={19}><X size={9} /></TitleIcon>
        </TitleRight>
      </TitleBar>
      <TabRow $h={18} $pl={11}>
        <Tab>文件</Tab>
        <Tab $active $under>开始</Tab>
        {['插入', '绘图', '页面布局', '公式', '数据', '审阅', '视图', '开发工具', '帮助'].map(t => <Tab key={t}>{t}</Tab>)}
        <Tab $green>数据透视表分析</Tab>
        <Tab $green>设计</Tab>
        <TabTools $gap={5}>
          <CommentBtn><MessageSquare size={8} />批注</CommentBtn>
          <ShareBtn><Share size={8} />共享<Caret s={5} c="#0c2a18" /></ShareBtn>
        </TabTools>
      </TabRow>
      <Ribbon $h={56} $ml={5} $mr={5}>
        <Group $w={64}>
          <GroupBody>
            <BigButton $w={36} $gap={1}><IconPaste /><span>粘贴</span><Caret /></BigButton>
            <ControlCol>
              <Scissors size={9} color="#ccc" />
              <ControlRow><Copy size={9} /><Caret /></ControlRow>
              <Paintbrush size={9} color="#e0b060" />
            </ControlCol>
          </GroupBody>
          <GroupLabel>剪贴板</GroupLabel>
          <Launcher />
        </Group>
        <Group $w={105}>
          <GroupBody>
            <ControlCol>
              <ControlRow $gap={2}><Combo $w={71}>等线<Caret /></Combo><Combo $w={24}>11<Caret /></Combo></ControlRow>
              <ControlRow $gap={7}>
                <Glyph $b={700} $s={7}>B</Glyph><Glyph $i $s={7}>I</Glyph><Glyph $u $s={7}>U</Glyph><Caret />
                <Glyph $s={9}>Aˆ</Glyph><Glyph $s={8}>Aˇ</Glyph>
              </ControlRow>
              <ControlRow $gap={5}>
                <Draw s={9}><rect x="2" y="2" width="20" height="20" /><path d="M2 12h20M12 2v20" /></Draw><Caret />
                <Glyph $s={7} $bar="#f2e02f">◇</Glyph><Caret />
                <Glyph $s={7} $bar="#d8261c">A</Glyph><Caret />
                <Glyph $s={5}>wén</Glyph><Caret />
              </ControlRow>
            </ControlCol>
          </GroupBody>
          <GroupLabel>字体</GroupLabel>
          <Launcher />
        </Group>
        <Group $w={81}>
          <GroupBody>
            <ControlCol>
              <ControlRow $gap={5}><AlignLeft size={10} /><AlignCenter size={10} /><AlignRight size={10} /><Glyph $s={7}>↕</Glyph></ControlRow>
              <ControlRow $gap={5}><AlignLeft size={10} /><AlignCenter size={10} /><AlignRight size={10} /><IconStyle tone="#4fa3e3" /><Caret /></ControlRow>
              <ControlRow $gap={5}><AlignLeft size={9} /><AlignRight size={9} /><Glyph $s={7}>↗</Glyph><Caret /></ControlRow>
            </ControlCol>
          </GroupBody>
          <GroupLabel>对齐方式</GroupLabel>
          <Launcher />
        </Group>
        <Group $w={62}>
          <GroupBody>
            <ControlCol>
              <ControlRow><Combo $w={52}>百分比<Caret /></Combo></ControlRow>
              <ControlRow $gap={3}><IconStyle tone="#d9a24d" /><Caret /><Glyph $s={9}>%</Glyph><Glyph $s={9} $b={700}>,</Glyph></ControlRow>
              <ControlRow $gap={4}><Glyph $s={5}>.00</Glyph><Glyph $s={5}>.0</Glyph></ControlRow>
            </ControlCol>
          </GroupBody>
          <GroupLabel>数字</GroupLabel>
          <Launcher />
        </Group>
        <Group $w={76}>
          <GroupBody>
            <StackList>
              <StackItem><IconStyle tone="#d8382c" />条件格式<Caret /></StackItem>
              <StackItem><IconStyle tone="#4fa3e3" />套用表格格式<Caret /></StackItem>
              <StackItem><IconStyle tone="#4fa3e3" />单元格样式<Caret /></StackItem>
            </StackList>
          </GroupBody>
          <GroupLabel>样式</GroupLabel>
        </Group>
        <Group $w={56}>
          <GroupBody>
            <StackList>
              <StackItem><IconStyle tone="#4fa3e3" />插入<Caret /></StackItem>
              <StackItem><IconStyle tone="#d8382c" />删除<Caret /></StackItem>
              <StackItem><IconStyle tone="#4fa3e3" />格式<Caret /></StackItem>
            </StackList>
          </GroupBody>
          <GroupLabel>单元格</GroupLabel>
        </Group>
        <Group $w={32}><GroupBody><BigButton><IconLens /><span>编辑</span><Caret /></BigButton></GroupBody></Group>
        <Group $w={35}>
          <GroupBody><BigButton><IconAddins /><span>加<br />载项</span></BigButton></GroupBody>
          <GroupLabel>加载项</GroupLabel>
        </Group>
        <Group $w={40}>
          <GroupBody><BigButton><IconPython /><span>Python</span></BigButton></GroupBody>
          <GroupLabel>Boardflare</GroupLabel>
        </Group>
        <CornerChevron><ChevronDown size={9} /></CornerChevron>
      </Ribbon>
      <FormulaRow name="D8" value="#DIV/0!" mt={6} ml={5} mr={3} boxW={42} />
      <Body $mt={3.5}>
        <SheetCol>
          <SheetWrap>
            <SheetGrid cols="17px 163px 59.5px 59px 59px 53px 34.5px" data={rightRows} selRow={8} totalCol />
            <VScroll><VThumb /></VScroll>
          </SheetWrap>
          <TabsBar $h={16.5}>
            <TabsNav $mr={27}><ChevronLeft size={9} /><ChevronRight size={9} /></TabsNav>
            {[1, 2, 3, 4, 5, 6, 7, 8, 9, 10, 11, 12, 13, 14].map(n => <SheetTab key={n}>{n}</SheetTab>)}
            <TabsEnd>
              <Ellipsis size={9} />
              <Plus size={9} />
              <EllipsisVertical size={9} />
            </TabsEnd>
            <HScroll><HThumb $w={10} /></HScroll>
          </TabsBar>
        </SheetCol>
        <PivotPanel checks={[0, 1, 7]} chips={['四级渠道...', '求和项:有效...']} />
      </Body>
      <StatusBar $h={12.5}><Status /></StatusBar>
    </Window>
  )
}

export default function App() {
  return (
    <Page>
      <Global />
      <Column $w={475}>
        <Heading>新增计算字段入口</Heading>
        <LeftWindow />
      </Column>
      <Column $w={585}>
        <Heading>有效率放入报表的效果</Heading>
        <RightWindow />
      </Column>
    </Page>
  )
}
